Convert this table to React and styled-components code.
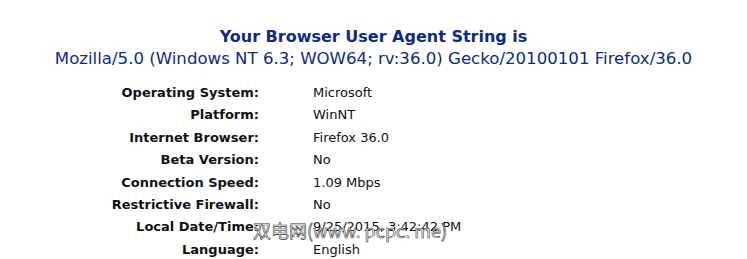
import React from 'react';
import styled, { createGlobalStyle } from 'styled-components';

const GlobalStyle = createGlobalStyle`
  body {
    margin: 0;
    background: #ffffff;
    font-family: "DejaVu Sans", Verdana, sans-serif;
  }
`;

const Page = styled.div`
  position: relative;
  width: 747px;
  height: 259px;
  overflow: hidden;
  padding-top: 27px;
  box-sizing: border-box;
`;

const Title = styled.h2`
  margin: 0;
  text-align: center;
  color: #0c2a8c;
  font-size: 16px;
  line-height: 20px;
  font-weight: bold;
`;

const AgentString = styled.p`
  margin: 1px 0 0;
  text-align: center;
  color: #0c2a8c;
  font-size: 16.6px;
  line-height: 22px;
`;

const InfoGrid = styled.div`
  display: grid;
  grid-template-columns: 259px 1fr;
  column-gap: 54px;
  margin-top: 12px;
`;

const Label = styled.div`
  text-align: right;
  font-weight: bold;
  font-size: 13px;
  line-height: 22.4px;
  color: #111;
`;

const Value = styled.div`
  font-size: 13px;
  line-height: 22.4px;
  color: #111;
`;

const Watermark = styled.div`
  position: absolute;
  left: 253px;
  top: 217px;
  font-family: "Noto Sans CJK SC", "DejaVu Sans", sans-serif;
  font-size: 18px;
  color: #fff;
  -webkit-text-stroke: 0.6px #333;
`;

const rows = [
  ['Operating System:', 'Microsoft'],
  ['Platform:', 'WinNT'],
  ['Internet Browser:', 'Firefox 36.0'],
  ['Beta Version:', 'No'],
  ['Connection Speed:', '1.09 Mbps'],
  ['Restrictive Firewall:', 'No'],
  ['Local Date/Time:', '9/25/2015, 3:42:42 PM'],
  ['Language:', 'English'],
];

export default function App() {
  return (
    <Page>
      <GlobalStyle />
      <Title>Your Browser User Agent String is</Title>
      <AgentString>
        Mozilla/5.0 (Windows NT 6.3; WOW64; rv:36.0) Gecko/20100101 Firefox/36.0
      </AgentString>
      <InfoGrid>
        {rows.map(([label, value]) => (
          <React.Fragment key={label}>
            <Label>{label}</Label>
            <Value>{value}</Value>
          </React.Fragment>
        ))}
      </InfoGrid>
      <Watermark>双电网(www. pcpc. me)</Watermark>
    </Page>
  );
}
